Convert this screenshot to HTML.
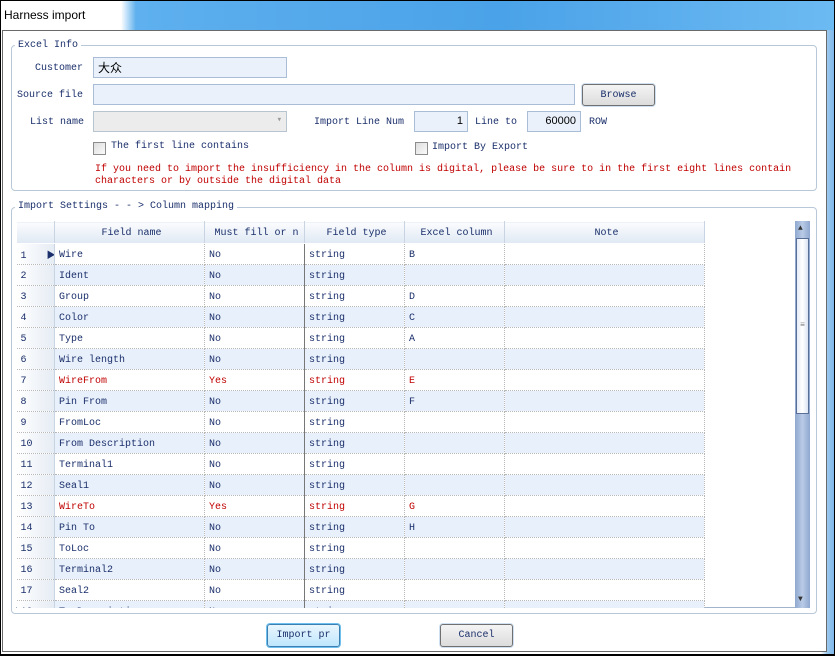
<!DOCTYPE html>
<html><head><meta charset="utf-8"><style>
*{margin:0;padding:0;box-sizing:border-box}
body{width:835px;height:656px;background:#000;position:relative;overflow:hidden;font-family:"Liberation Mono","Noto Sans CJK SC",monospace;font-size:10px;color:#1a2f6b}
.a{position:absolute;white-space:nowrap}
#title{left:1px;top:1px;width:833px;height:29px;background:linear-gradient(90deg,#fff 0,#fff 120px,#5eb0ee 135px,#4aa2e8 60%,#6cbaf2 100%)}
#title span{position:absolute;left:3px;top:7px;font-family:"Liberation Sans",sans-serif;font-size:12px;color:#000}
#frame{left:1px;top:30px;width:833px;height:624px;background:linear-gradient(90deg,#fff 0,#fff 820px,#9cc9ee 826px,#7fb8ea 100%)}
#client{left:2px;top:30px;width:825px;height:622px;background:#fff;border:1px solid #6a6a6a}
.grp{border:1px solid #b8c8d8;border-radius:4px}
.lg{background:#fff;padding:0 3px;color:#1a2f6b}
.inp{background:#eaf1fb;border:1px solid #a9bdd6}
.btn{border:1px solid #707070;border-radius:3px;background:linear-gradient(#f4f4f4,#dcdcdc);text-align:center;line-height:21px;box-shadow:0 0 0 1px #cfe0f2}
.cb{width:13px;height:13px;border:1px solid #8c8c8c;background:linear-gradient(135deg,#ddd,#fafafa)}
.red{color:#c00000}
table{border-collapse:collapse;position:absolute;left:16px;top:221px;table-layout:fixed;width:688px}
td,th{height:21px;padding:2px 0 0 4px;font-weight:normal;white-space:nowrap;overflow:hidden;text-align:left;border-right:1px dotted #b8b8b8;border-bottom:1px dotted #b8b8b8}
th{text-align:center;background:linear-gradient(#fbfcfe,#dfe8f3);border:1px solid #fff;border-right:1px solid #c8d4e2;height:22px}
tr.b td{background:#e8f0fb}
td.n{background:linear-gradient(90deg,#fff,#e6ecf4)!important;border-right:1px solid #c8d4e2}
td.ft{border-left:1px solid #777}
tr.r td{color:#c00000}
tr.r td.n{color:#1a2f6b}
</style></head><body>
<div class="a" id="title"><span>Harness import</span></div>
<div class="a" id="frame"></div>
<div class="a" id="client"></div>

<div class="a grp" style="left:11px;top:45px;width:806px;height:146px"></div>
<div class="a lg" style="left:15px;top:40px">Excel Info</div>
<div class="a" style="left:35px;top:63px">Customer</div>
<div class="a inp" style="left:93px;top:57px;width:194px;height:21px;padding:2px 4px;font-family:'Noto Sans CJK SC',sans-serif;font-size:12px;color:#000;line-height:15px">大众</div>
<div class="a" style="left:17px;top:90px">Source file</div>
<div class="a inp" style="left:93px;top:84px;width:482px;height:21px"></div>
<div class="a btn" style="left:582px;top:84px;width:73px;height:22px;line-height:22px">Browse</div>
<div class="a" style="left:30px;top:117px">List name</div>
<div class="a" style="left:93px;top:111px;width:194px;height:21px;background:#ececec;border:1px solid #b8c4d0"><span class="a" style="right:4px;top:3px;color:#999;font-size:9px">▾</span></div>
<div class="a" style="left:314px;top:117px">Import Line Num</div>
<div class="a inp" style="left:414px;top:111px;width:54px;height:21px;text-align:right;padding:3px 4px;font-family:'Liberation Sans',sans-serif;font-size:11px;color:#000">1</div>
<div class="a" style="left:475px;top:117px">Line to</div>
<div class="a inp" style="left:527px;top:111px;width:54px;height:21px;text-align:right;padding:3px 4px;font-family:'Liberation Sans',sans-serif;font-size:11px;color:#000">60000</div>
<div class="a" style="left:589px;top:117px">ROW</div>
<div class="a cb" style="left:93px;top:142px"></div>
<div class="a" style="left:111px;top:141px">The first line contains</div>
<div class="a cb" style="left:415px;top:142px"></div>
<div class="a" style="left:432px;top:142px">Import By Export</div>
<div class="a red" style="left:95px;top:164px;line-height:12px">If you need to import the insufficiency in the column is digital, please be sure to in the first eight lines contain<br>characters or by outside the digital data</div>

<div class="a grp" style="left:11px;top:207px;width:806px;height:407px"></div>
<div class="a lg" style="left:15px;top:201px">Import Settings - - &gt; Column mapping</div>
<div class="a" style="left:16px;top:221px;width:779px;height:387px;background:#fff;border-bottom:1px solid #a0b4cc"></div>
<div class="a" style="left:16px;top:221px;width:779px;height:387px;overflow:hidden">
<table style="left:0;top:0">
<tr><th style="width:38px"></th><th style="width:150px">Field name</th><th style="width:100px">Must fill or n</th><th style="width:100px">Field type</th><th style="width:100px">Excel column</th><th style="width:200px">Note</th></tr>
<tr><td class="n">1 <span style="margin-left:14px;font-size:9px">▶</span></td><td>Wire</td><td>No</td><td class="ft">string</td><td>B</td><td></td></tr>
<tr class="b"><td class="n">2</td><td>Ident</td><td>No</td><td class="ft">string</td><td></td><td></td></tr>
<tr><td class="n">3</td><td>Group</td><td>No</td><td class="ft">string</td><td>D</td><td></td></tr>
<tr class="b"><td class="n">4</td><td>Color</td><td>No</td><td class="ft">string</td><td>C</td><td></td></tr>
<tr><td class="n">5</td><td>Type</td><td>No</td><td class="ft">string</td><td>A</td><td></td></tr>
<tr class="b"><td class="n">6</td><td>Wire length</td><td>No</td><td class="ft">string</td><td></td><td></td></tr>
<tr class="r"><td class="n">7</td><td>WireFrom</td><td>Yes</td><td class="ft">string</td><td>E</td><td></td></tr>
<tr class="b"><td class="n">8</td><td>Pin From</td><td>No</td><td class="ft">string</td><td>F</td><td></td></tr>
<tr><td class="n">9</td><td>FromLoc</td><td>No</td><td class="ft">string</td><td></td><td></td></tr>
<tr class="b"><td class="n">10</td><td>From Description</td><td>No</td><td class="ft">string</td><td></td><td></td></tr>
<tr><td class="n">11</td><td>Terminal1</td><td>No</td><td class="ft">string</td><td></td><td></td></tr>
<tr class="b"><td class="n">12</td><td>Seal1</td><td>No</td><td class="ft">string</td><td></td><td></td></tr>
<tr class="r"><td class="n">13</td><td>WireTo</td><td>Yes</td><td class="ft">string</td><td>G</td><td></td></tr>
<tr class="b"><td class="n">14</td><td>Pin To</td><td>No</td><td class="ft">string</td><td>H</td><td></td></tr>
<tr><td class="n">15</td><td>ToLoc</td><td>No</td><td class="ft">string</td><td></td><td></td></tr>
<tr class="b"><td class="n">16</td><td>Terminal2</td><td>No</td><td class="ft">string</td><td></td><td></td></tr>
<tr><td class="n">17</td><td>Seal2</td><td>No</td><td class="ft">string</td><td></td><td></td></tr>
<tr class="b"><td class="n">18</td><td>To Description</td><td>No</td><td class="ft">string</td><td></td><td></td></tr>
</table>
</div>
<div class="a" style="left:795px;top:221px;width:15px;height:387px;background:linear-gradient(90deg,#8fa8cf,#b9cbe6,#8fa8cf)"></div>
<div class="a" style="left:798px;top:224px;color:#333;font-size:8px">▲</div>
<div class="a" style="left:796px;top:238px;width:13px;height:176px;border:1px solid #5a6f96;background:linear-gradient(90deg,#e6edf8,#fff,#dbe4f2);font-size:8px;color:#777;text-align:center;line-height:174px">≡</div>
<div class="a" style="left:798px;top:595px;color:#333;font-size:8px">▼</div>

<div class="a btn" style="left:267px;top:624px;width:73px;height:23px;box-shadow:0 0 0 1px #6fc0ee;border-color:#3c7fb1;background:linear-gradient(#eaf6fd,#bee6fd)">Import pr</div>
<div class="a btn" style="left:440px;top:624px;width:73px;height:23px">Cancel</div>
</body></html>
